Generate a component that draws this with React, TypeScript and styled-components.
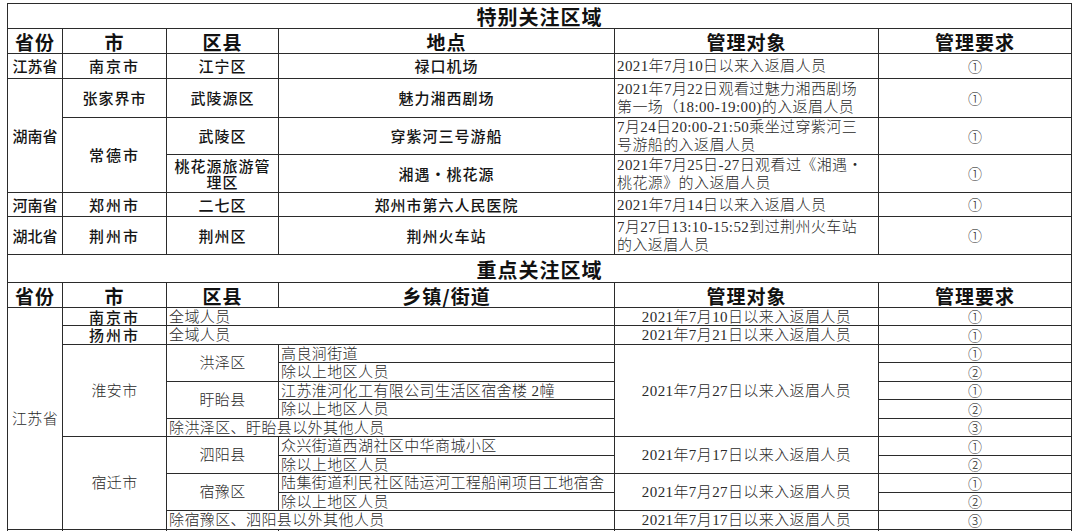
import React from "react";
import styled, { createGlobalStyle } from "styled-components";

const GlobalStyle = createGlobalStyle`
	html, body {
		margin: 0;
		padding: 0;
		background: #ffffff;
	}
	body {
		font-family: "Noto Sans CJK SC", "Noto Sans", sans-serif;
		color: #111111;
	}
`;

const Page = styled.div`
	width: 1080px;
	height: 531px;
	box-sizing: border-box;
	padding: 3px 0 0 7px;
	overflow: hidden;
`;

const Sheet = styled.table`
	border-collapse: collapse;
	table-layout: fixed;
	width: 1064px;
	border: 1px solid #333333;
`;

const Row = styled.tr<{ $h: number }>`
	height: ${(p) => p.$h}px;
`;

const BaseCell = styled.td`
	border: 1px solid #2b2b2b;
	padding: 0;
	overflow: hidden;
	white-space: nowrap;
	vertical-align: middle;
`;

const TitleCell = styled(BaseCell)`
	text-align: center;
	padding-top: 2px;
	font-size: 20px;
	font-weight: 700;
	line-height: 20px;
	letter-spacing: 1px;
	color: #111111;
`;

const HeadCell = styled(BaseCell)`
	text-align: center;
	font-size: 19px;
	font-weight: 700;
	line-height: 21px;
	letter-spacing: 1px;
	color: #111111;
`;

/* bold sans text, like 黑体 in the sheet */
const SansCell = styled(BaseCell)<{ $spread?: number }>`
	text-align: center;
	font-size: 15px;
	font-weight: 500;
	line-height: 16px;
	letter-spacing: ${(p) => p.$spread ?? 1}px;
	color: #151515;
`;

/* thin serif text, like 宋体 with Times digits */
const SerifCell = styled(BaseCell)<{ $align?: "left" | "center" }>`
	text-align: ${(p) => p.$align ?? "center"};
	padding-left: ${(p) => (p.$align === "left" ? "2px" : "0")};
	font-family: "Liberation Serif", "Noto Sans CJK SC", serif;
	font-size: 15px;
	font-weight: 300;
	line-height: 16px;
	letter-spacing: 0.4px;
	color: #2a2a2a;
`;

/* two-line notes in the first block have a looser leading */
const NoteCell = styled(SerifCell)`
	line-height: 18px;
`;

const MarkCell = styled(BaseCell)`
	text-align: center;
	font-family: "Noto Sans CJK SC", serif;
	font-size: 14px;
	font-weight: 300;
	line-height: 15px;
	color: #2a2a2a;
`;

const widths = [55, 104, 112, 336, 264, 193];

const Header: React.FC<{ place: string }> = ({ place }) => (
	<Row $h={25}>
		{["省份", "市", "区县", place, "管理对象", "管理要求"].map((t) => (
			<HeadCell key={t}>{t}</HeadCell>
		))}
	</Row>
);

export default function App() {
	return (
		<Page>
			<GlobalStyle />
			<Sheet>
				<colgroup>
					{widths.map((w, i) => (
						<col key={i} style={{ width: w }} />
					))}
				</colgroup>
				<tbody>
					<Row $h={25}>
						<TitleCell colSpan={6}>特别关注区域</TitleCell>
					</Row>
					<Header place="地点" />
					<Row $h={25}>
						<SansCell $spread={0}>江苏省</SansCell>
						<SansCell $spread={2}>南京市</SansCell>
						<SansCell>江宁区</SansCell>
						<SansCell>禄口机场</SansCell>
						<NoteCell $align="left">2021年7月10日以来入返眉人员</NoteCell>
						<MarkCell>①</MarkCell>
					</Row>
					<Row $h={39}>
						<SansCell rowSpan={3} $spread={0}>湖南省</SansCell>
						<SansCell>张家界市</SansCell>
						<SansCell>武陵源区</SansCell>
						<SansCell>魅力湘西剧场</SansCell>
						<NoteCell $align="left">
							2021年7月22日观看过魅力湘西剧场
							<br />
							第一场（18:00-19:00)的入返眉人员
						</NoteCell>
						<MarkCell>①</MarkCell>
					</Row>
					<Row $h={36}>
						<SansCell rowSpan={2} $spread={2}>常德市</SansCell>
						<SansCell>武陵区</SansCell>
						<SansCell>穿紫河三号游船</SansCell>
						<NoteCell $align="left">
							7月24日20:00-21:50乘坐过穿紫河三
							<br />
							号游船的入返眉人员
						</NoteCell>
						<MarkCell>①</MarkCell>
					</Row>
					<Row $h={38}>
						<SansCell>
							桃花源旅游管
							<br />
							理区
						</SansCell>
						<SansCell>湘遇・桃花源</SansCell>
						<NoteCell $align="left">
							2021年7月25日-27日观看过《湘遇・
							<br />
							桃花源》的入返眉人员
						</NoteCell>
						<MarkCell>①</MarkCell>
					</Row>
					<Row $h={24}>
						<SansCell $spread={0}>河南省</SansCell>
						<SansCell $spread={2}>郑州市</SansCell>
						<SansCell>二七区</SansCell>
						<SansCell>郑州市第六人民医院</SansCell>
						<NoteCell $align="left">2021年7月14日以来入返眉人员</NoteCell>
						<MarkCell>①</MarkCell>
					</Row>
					<Row $h={38}>
						<SansCell $spread={0}>湖北省</SansCell>
						<SansCell $spread={2}>荆州市</SansCell>
						<SansCell>荆州区</SansCell>
						<SansCell>荆州火车站</SansCell>
						<NoteCell $align="left">
							7月27日13:10-15:52到过荆州火车站
							<br />
							的入返眉人员
						</NoteCell>
						<MarkCell>①</MarkCell>
					</Row>

					<Row $h={28}>
						<TitleCell colSpan={6}>重点关注区域</TitleCell>
					</Row>
					<Header place="乡镇/街道" />
					<Row $h={18}>
						<SerifCell rowSpan={12}>江苏省</SerifCell>
						<SansCell $spread={2}>南京市</SansCell>
						<SerifCell colSpan={2} $align="left">全域人员</SerifCell>
						<SerifCell>2021年7月10日以来入返眉人员</SerifCell>
						<MarkCell>①</MarkCell>
					</Row>
					<Row $h={19}>
						<SansCell $spread={2}>扬州市</SansCell>
						<SerifCell colSpan={2} $align="left">全域人员</SerifCell>
						<SerifCell>2021年7月21日以来入返眉人员</SerifCell>
						<MarkCell>①</MarkCell>
					</Row>
					<Row $h={18}>
						<SerifCell rowSpan={5}>淮安市</SerifCell>
						<SerifCell rowSpan={2}>洪泽区</SerifCell>
						<SerifCell $align="left">高良涧街道</SerifCell>
						<SerifCell rowSpan={5}>2021年7月27日以来入返眉人员</SerifCell>
						<MarkCell>①</MarkCell>
					</Row>
					<Row $h={19}>
						<SerifCell $align="left">除以上地区人员</SerifCell>
						<MarkCell>②</MarkCell>
					</Row>
					<Row $h={18}>
						<SerifCell rowSpan={2}>盱眙县</SerifCell>
						<SerifCell $align="left">江苏淮河化工有限公司生活区宿舍楼 2幢</SerifCell>
						<MarkCell>①</MarkCell>
					</Row>
					<Row $h={19}>
						<SerifCell $align="left">除以上地区人员</SerifCell>
						<MarkCell>②</MarkCell>
					</Row>
					<Row $h={18}>
						<SerifCell colSpan={2} $align="left">除洪泽区、盱眙县以外其他人员</SerifCell>
						<MarkCell>③</MarkCell>
					</Row>
					<Row $h={19}>
						<SerifCell rowSpan={5}>宿迁市</SerifCell>
						<SerifCell rowSpan={2}>泗阳县</SerifCell>
						<SerifCell $align="left">众兴街道西湖社区中华商城小区</SerifCell>
						<SerifCell rowSpan={2}>2021年7月17日以来入返眉人员</SerifCell>
						<MarkCell>①</MarkCell>
					</Row>
					<Row $h={18}>
						<SerifCell $align="left">除以上地区人员</SerifCell>
						<MarkCell>②</MarkCell>
					</Row>
					<Row $h={19}>
						<SerifCell rowSpan={2}>宿豫区</SerifCell>
						<SerifCell $align="left">陆集街道利民社区陆运河工程船闸项目工地宿舍</SerifCell>
						<SerifCell rowSpan={2}>2021年7月27日以来入返眉人员</SerifCell>
						<MarkCell>①</MarkCell>
					</Row>
					<Row $h={18}>
						<SerifCell $align="left">除以上地区人员</SerifCell>
						<MarkCell>②</MarkCell>
					</Row>
					<Row $h={19}>
						<SerifCell colSpan={2} $align="left">除宿豫区、泗阳县以外其他人员</SerifCell>
						<SerifCell>2021年7月17日以来入返眉人员</SerifCell>
						<MarkCell>③</MarkCell>
					</Row>
					<Row $h={18}>
						{widths.map((_, i) => (
							<BaseCell key={i} />
						))}
					</Row>
				</tbody>
			</Sheet>
		</Page>
	);
}
